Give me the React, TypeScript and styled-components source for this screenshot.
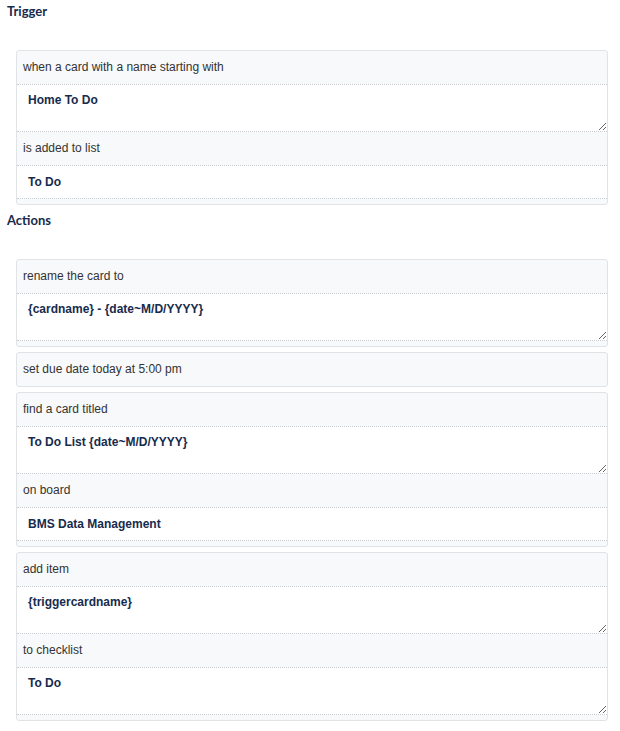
import styled, { createGlobalStyle } from "styled-components";

const GlobalStyle = createGlobalStyle`
    body {
        margin: 0;
        background: #ffffff;
        font-family: "Liberation Sans", Arial, sans-serif;
    }
`;

const Page = styled.div`
    padding: 0 12px 0 7px;
`;

const SectionTitle = styled.h3<{ $first?: boolean }>`
    margin: ${(p) => (p.$first ? "0" : "4px")} 0 27px;
    font-family: Lato, "Open Sans", sans-serif;
    font-size: 13px;
    font-weight: 700;
    line-height: 23px;
    color: #172b4d;
`;

const CardList = styled.div`
    display: flex;
    flex-direction: column;
    gap: 5px;
    margin-left: 9px;
`;

const Card = styled.div`
    display: flex;
    flex-direction: column;
    background: #f8f9fa;
    border: 1px solid #e1e4e7;
    border-radius: 3px;

    & > textarea:last-child,
    & > input:last-child {
        margin-bottom: 5px;
    }
`;

const Label = styled.div`
    padding: 8px 6px;
    font-size: 12px;
    line-height: 17px;
    color: #333333;
`;

const fieldBase = `
    display: block;
    width: 100%;
    box-sizing: border-box;
    margin: 0;
    background: #ffffff;
    border: none;
    border-top: 1px dotted #c9cdd2;
    border-bottom: 1px dotted #c9cdd2;
    outline: none;
    font-family: "Liberation Sans", Arial, sans-serif;
    font-size: 12px;
    font-weight: 700;
    color: #172b4d;
    padding: 0 11px;
`;

const TextArea = styled.textarea`
    ${fieldBase}
    height: 48px;
    padding-top: 8px;
    line-height: 14px;
    resize: vertical;
`;

const LineInput = styled.input`
    ${fieldBase}
    height: 34px;
`;

type Row = { label?: string; value?: string; area?: boolean };

const trigger: Row[][] = [
    [
        { label: "when a card with a name starting with" },
        { value: "Home To Do", area: true },
        { label: "is added to list" },
        { value: "To Do" },
    ],
];

const actions: Row[][] = [
    [{ label: "rename the card to" }, { value: "{cardname} - {date~M/D/YYYY}", area: true }],
    [{ label: "set due date today at 5:00 pm" }],
    [
        { label: "find a card titled" },
        { value: "To Do List {date~M/D/YYYY}", area: true },
        { label: "on board" },
        { value: "BMS Data Management" },
    ],
    [
        { label: "add item" },
        { value: "{triggercardname}", area: true },
        { label: "to checklist" },
        { value: "To Do", area: true },
    ],
];

function RuleCard({ rows }: { rows: Row[] }) {
    return (
        <Card>
            {rows.map((row, i) =>
                row.label ? (
                    <Label key={i}>{row.label}</Label>
                ) : row.area ? (
                    <TextArea key={i} defaultValue={row.value} spellCheck={false} />
                ) : (
                    <LineInput key={i} defaultValue={row.value} spellCheck={false} />
                )
            )}
        </Card>
    );
}

export default function App() {
    return (
        <Page>
            <GlobalStyle />
            <SectionTitle $first>Trigger</SectionTitle>
            <CardList>
                {trigger.map((rows, i) => (
                    <RuleCard key={i} rows={rows} />
                ))}
            </CardList>
            <SectionTitle>Actions</SectionTitle>
            <CardList>
                {actions.map((rows, i) => (
                    <RuleCard key={i} rows={rows} />
                ))}
            </CardList>
        </Page>
    );
}
